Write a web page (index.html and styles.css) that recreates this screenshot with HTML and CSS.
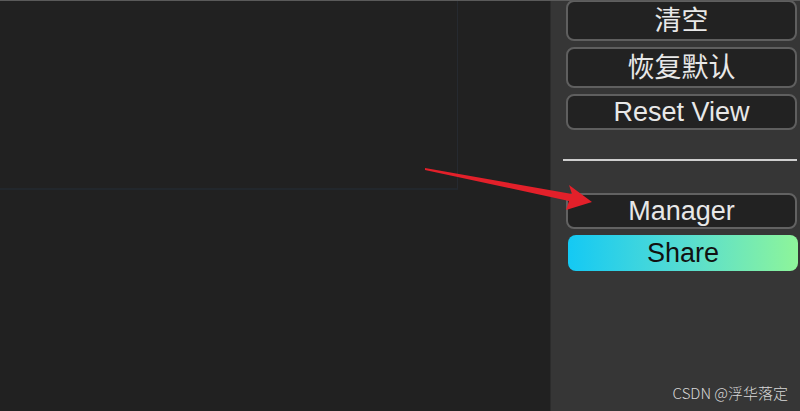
FILE: index.html
```html
<!DOCTYPE html>
<html lang="zh-CN">
<head>
    <meta charset="UTF-8">
    <title>Editor</title>
    <link rel="stylesheet" href="styles.css">
</head>
<body>
    <div class="app">
        <div class="canvas">
            <div class="grid-cell"></div>
        </div>

        <div class="panel">
            <button class="btn btn-cjk">清空</button>
            <button class="btn btn-cjk">恢复默认</button>
            <button class="btn">Reset View</button>
            <hr class="divider">
            <button class="btn btn-manager">Manager</button>
            <button class="btn btn-share">Share</button>
        </div>

        <!-- annotation arrow -->
        <svg class="arrow" width="800" height="411" viewBox="0 0 800 411">
            <polygon points="425,167 572,193 569,184 592,201 566,209 569,200 425,169" fill="#e3202a"/>
        </svg>

        <div class="watermark">CSDN @浮华落定</div>
    </div>
</body>
</html>
```

FILE: styles.css
```css
html, body {
    margin: 0;
    padding: 0;
    background-color: #212121;
}
.app {
    position: relative;
    display: flex;
    width: 800px;
    height: 411px;
    overflow: hidden;
    border-top: 1px solid #5a5a5a;
    box-sizing: border-box;
    font-family: "Liberation Sans", Arial, "Noto Sans CJK SC", sans-serif;
}
.canvas {
    flex: 0 0 551px;
    background-color: #212121;
    border-right: 1px solid #2c2c2c;
    box-sizing: border-box;
}
.grid-cell {
    width: 457px;
    height: 187px;
    border-right: 1px solid #262a30;
    border-bottom: 2px solid #22272c;
}
.panel {
    flex: 1;
    background-color: #363636;
    display: flex;
    flex-direction: column;
    gap: 6px;
    padding: 0 3px 0 15px;
    margin-top: -1px;
}
.btn {
    display: block;
    width: 100%;
    height: 36px;
    padding: 0;
    border: 2px solid #5f5f5f;
    border-radius: 8px;
    background-color: #222222;
    color: #e8e8e8;
    font-family: "Liberation Sans", Arial, "Noto Sans CJK SC", sans-serif;
    font-size: 27px;
    line-height: 30px;
    cursor: pointer;
}
.btn-cjk {
    height: 41px;
}
.divider {
    margin: 23px 0 26px -3px;
    border: none;
    height: 2px;
    background-color: #cfcfcf;
}
.btn-manager {
    border-color: #626262;
}
.btn-share {
    border: none;
    margin-left: 2px;
    width: calc(100% - 1px);
    background: linear-gradient(90deg, #14c9f4 0%, #55dcd2 50%, #8ef59a 100%);
    color: #111111;
}
.arrow {
    position: absolute;
    top: 0;
    left: 0;
    pointer-events: none;
}
.watermark {
    position: absolute;
    right: 12px;
    bottom: 9px;
    color: #d8d8d8;
    font-family: "Noto Sans CJK SC", sans-serif;
    font-size: 15px;
    font-weight: 300;
    line-height: 18px;
}
```
